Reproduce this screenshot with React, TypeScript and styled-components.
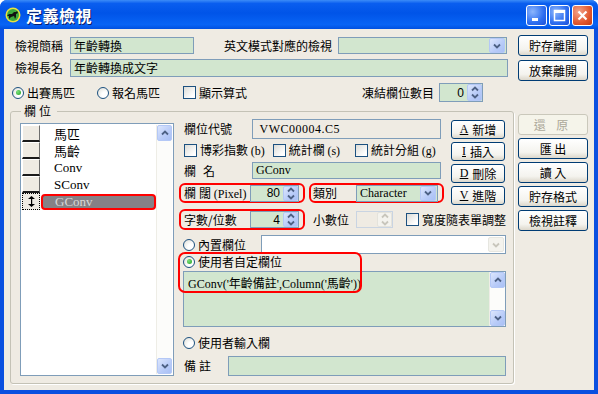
import React from 'react';
import styled, { createGlobalStyle } from 'styled-components';

const FIELD_GREEN = '#D2E6CF';
const FIELD_BORDER = '#7F9DB9';
const FACE = '#EFEBE3';

const GlobalStyle = createGlobalStyle`
  html, body { margin: 0; padding: 0; background: #fff; }
  body {
    font-family: "Liberation Serif", "Noto Sans CJK TC", serif;
    font-size: 12px;
    color: #000;
  }
  * { box-sizing: border-box; }
`;

const Window = styled.div`
  width: 598px;
  height: 394px;
  display: flex;
  flex-direction: column;
  background: #0A4FE0;
  border-radius: 7px 7px 0 0;
  overflow: hidden;
`;

const TitleBar = styled.div`
  height: 29px;
  flex: none;
  display: flex;
  align-items: center;
  padding: 0 5px 0 5px;
  background: linear-gradient(#3C8CF8 0%, #0A5EEF 12%, #0054E8 45%, #0864F5 85%, #0050E0 100%);
`;

const TitleText = styled.div`
  margin-left: 5px;
  font-family: "Noto Sans CJK TC", sans-serif;
  font-size: 16px;
  font-weight: 700;
  color: #fff;
  text-shadow: 1px 1px 0 #0A1E6A;
  letter-spacing: 0.5px;
`;

const TitleButtons = styled.div`
  margin-left: auto;
  display: flex;
  gap: 2px;
  margin-top: 2px;
`;

const CaptionButton = styled.div<{ $close?: boolean }>`
  width: 21px;
  height: 21px;
  border: 1px solid #fff;
  border-radius: 3px;
  display: flex;
  align-items: center;
  justify-content: center;
  background: ${(p) =>
    p.$close
      ? 'radial-gradient(circle at 30% 30%, #F2A48C, #E2582F 60%, #C33A12)'
      : 'radial-gradient(circle at 30% 30%, #8CB5FC, #2E6EF0 60%, #1A4FD8)'};
`;

const Client = styled.div`
  flex: 1;
  margin: 0 4px 4px 4px;
  background: ${FACE};
  display: flex;
  gap: 6px;
  padding: 6px 6px 6px 6px;
`;

const LeftMain = styled.div`
  width: 502px;
  display: flex;
  flex-direction: column;
`;

const Row = styled.div<{ $mt?: number; $h?: number }>`
  display: flex;
  align-items: center;
  margin-top: ${(p) => p.$mt ?? 0}px;
  height: ${(p) => p.$h ?? 17}px;
`;

const Label = styled.span<{ $w?: number; $ml?: number; $ls?: number }>`
  font-family: "Noto Sans CJK TC", sans-serif;
  white-space: nowrap;
  width: ${(p) => (p.$w ? `${p.$w}px` : 'auto')};
  margin-left: ${(p) => p.$ml ?? 0}px;
  letter-spacing: ${(p) => p.$ls ?? 0}px;
  flex: none;
  line-height: 14px;
`;

const Latin = styled.span`
  font-family: "Liberation Serif", serif;
`;

const Spaced = styled.span<{ $gap: number }>`
  margin-right: ${(p) => p.$gap}px;
`;

const Field = styled.div<{ $w?: number; $h?: number; $bg?: string; $ml?: number }>`
  width: ${(p) => (p.$w ? `${p.$w}px` : 'auto')};
  flex: ${(p) => (p.$w ? 'none' : '1')};
  height: ${(p) => p.$h ?? 17}px;
  margin-left: ${(p) => p.$ml ?? 0}px;
  border: 1px solid ${FIELD_BORDER};
  background: ${(p) => p.$bg ?? FIELD_GREEN};
  display: flex;
  align-items: center;
  padding: 0 3px;
  white-space: nowrap;
  overflow: hidden;
  font-family: "Liberation Serif", "Noto Sans CJK TC", serif;
`;

const DropButton = styled.div<{ $disabled?: boolean }>`
  margin-left: auto;
  margin-right: -2px;
  width: 16px;
  height: 15px;
  flex: none;
  border: 1px solid ${(p) => (p.$disabled ? '#E6E6E0' : '#B4C8F6')};
  border-radius: 2px;
  background: ${(p) =>
    p.$disabled ? '#F4F3EE' : 'linear-gradient(135deg, #DCE6FD, #B8CBF8 60%, #A9C0F5)'};
  display: flex;
  align-items: center;
  justify-content: center;
`;

const Chevron = ({ up, color = '#4D6185' }: { up?: boolean; color?: string }) => (
  <svg width="8" height="6" viewBox="0 0 8 6">
    <path
      d={up ? 'M1 4.5 L4 1.5 L7 4.5' : 'M1 1.5 L4 4.5 L7 1.5'}
      fill="none"
      stroke={color}
      strokeWidth="1.8"
    />
  </svg>
);

const SpinBox = styled.div<{ $w: number; $h?: number; $bg?: string; $disabled?: boolean; $ml?: number }>`
  width: ${(p) => p.$w}px;
  height: ${(p) => p.$h ?? 17}px;
  margin-left: ${(p) => p.$ml ?? 0}px;
  flex: none;
  border: 1px solid ${(p) => (p.$disabled ? '#C9D4E2' : FIELD_BORDER)};
  background: ${(p) => p.$bg ?? FIELD_GREEN};
  display: flex;
  align-items: center;
`;

const SpinValue = styled.span`
  flex: 1;
  text-align: right;
  padding-right: 3px;
  font-family: "Liberation Sans", sans-serif;
  font-size: 12px;
`;

const SpinButton = styled.div<{ $disabled?: boolean }>`
  width: 15px;
  align-self: stretch;
  border: 1px solid ${(p) => (p.$disabled ? '#E4E3DC' : '#B4C8F6')};
  border-radius: 2px;
  background: ${(p) =>
    p.$disabled ? '#F4F3EE' : 'linear-gradient(135deg, #DCE6FD, #B8CBF8 60%, #A9C0F5)'};
  display: flex;
  flex-direction: column;
  align-items: center;
  justify-content: center;
  gap: 1px;
`;

const Spin = ({ w, value, h, ml, disabled }: { w: number; value?: string; h?: number; ml?: number; disabled?: boolean }) => {
  const c = disabled ? '#C8C6BC' : '#4D6185';
  return (
    <SpinBox $w={w} $h={h} $ml={ml} $disabled={disabled} $bg={disabled ? FACE : FIELD_GREEN}>
      <SpinValue>{value}</SpinValue>
      <SpinButton $disabled={disabled}>
        <Chevron up color={c} />
        <Chevron color={c} />
      </SpinButton>
    </SpinBox>
  );
};

const RadioCircle = styled.span`
  width: 12px;
  height: 12px;
  flex: none;
  border-radius: 50%;
  border: 1px solid #1C5180;
  background: radial-gradient(circle at 70% 70%, #fff 30%, #DCDCD4);
  display: flex;
  align-items: center;
  justify-content: center;
`;

const RadioDot = styled.span`
  width: 5px;
  height: 5px;
  border-radius: 50%;
  background: radial-gradient(circle at 35% 35%, #7CE07C, #21A121);
`;

const CheckSquare = styled.span`
  width: 13px;
  height: 13px;
  flex: none;
  border: 1px solid #1C5180;
  background: linear-gradient(135deg, #DCDCD7, #fff 80%);
`;

const Option = styled.div<{ $ml?: number }>`
  display: flex;
  align-items: center;
  gap: 3px;
  margin-left: ${(p) => p.$ml ?? 0}px;
  font-family: "Noto Sans CJK TC", sans-serif;
  white-space: nowrap;
  line-height: 14px;
`;

const Radio = ({ checked, children, ml }: { checked?: boolean; children: React.ReactNode; ml?: number }) => (
  <Option $ml={ml}>
    <RadioCircle>{checked && <RadioDot />}</RadioCircle>
    <span>{children}</span>
  </Option>
);

const Check = ({ children, ml }: { children: React.ReactNode; ml?: number }) => (
  <Option $ml={ml}>
    <CheckSquare />
    <span>{children}</span>
  </Option>
);

const XPButton = styled.div<{ $disabled?: boolean; $h?: number }>`
  height: ${(p) => p.$h ?? 21}px;
  width: 100%;
  flex: none;
  border: 1px solid ${(p) => (p.$disabled ? '#CAC8BB' : '#003C74')};
  border-radius: 3px;
  background: ${(p) =>
    p.$disabled ? '#F5F4EA' : 'linear-gradient(#FFFFFF, #F4F3EE 70%, #DCD7CB)'};
  color: ${(p) => (p.$disabled ? '#ACA899' : '#000')};
  display: flex;
  align-items: center;
  justify-content: center;
  font-family: "Noto Sans CJK TC", sans-serif;
  letter-spacing: ${(p) => (p.$disabled ? 4 : 0)}px;
  white-space: nowrap;
`;

const Hot = styled.span`
  font-family: "Liberation Serif", serif;
  text-decoration: underline;
  margin-right: 4px;
`;

const RightCol = styled.div`
  width: 70px;
  display: flex;
  flex-direction: column;
  gap: 3px;
`;

const FreezeGroup = styled.div`
  margin-left: auto;
  margin-right: 29px;
  display: flex;
  align-items: center;
`;

const Group = styled.fieldset`
  margin: 2px 0 0 0;
  flex: 1;
  min-height: 0;
  border: 1px solid #C4C2B6;
  border-radius: 3px;
  box-shadow: 1px 1px 0 #fff;
  padding: 1px 7px 7px 9px;
  display: flex;
  gap: 7px;
`;

const Legend = styled.legend`
  padding: 0 3px;
  margin-left: 1px;
  font-family: "Noto Sans CJK TC", sans-serif;
  letter-spacing: 3px;
  line-height: 14px;
`;

const List = styled.div`
  width: 154px;
  margin-top: 4px;
  border: 1px solid ${FIELD_BORDER};
  background: #fff;
  display: flex;
  padding: 1px;
`;

const ListRows = styled.div`
  flex: 1;
  display: flex;
  flex-direction: column;
`;

const ListRow = styled.div`
  height: 17px;
  display: flex;
  align-items: stretch;
`;

const RowHead = styled.div<{ $current?: boolean }>`
  width: 18px;
  flex: none;
  background: ${FACE};
  border-bottom: ${(p) => (p.$current ? '1px dotted #000' : '2px solid #1A1A1A')};
  border-right: 1px ${(p) => (p.$current ? 'dotted #000' : 'solid #6E6E6E')};
  border-top: ${(p) => (p.$current ? '1px dotted #000' : '1px solid #fff')};
  border-left: ${(p) => (p.$current ? '1px dotted #000' : '1px solid #fff')};
  display: flex;
  align-items: center;
  justify-content: center;
`;

const RowCell = styled.div<{ $selected?: boolean }>`
  flex: 1;
  display: flex;
  align-items: center;
  padding-left: ${(p) => (p.$selected ? 12 : 14)}px;
  margin: ${(p) => (p.$selected ? '1px 0 0 1px' : '0')};
  background: ${(p) => (p.$selected ? '#868186' : 'transparent')};
  color: ${(p) => (p.$selected ? '#D8D8D8' : '#000')};
  border: ${(p) => (p.$selected ? '2px solid #F00' : 'none')};
  border-radius: ${(p) => (p.$selected ? '4px' : '0')};
  font-family: "Liberation Serif", "Noto Sans CJK TC", serif;
  font-size: 13px;
`;

const ScrollTrack = styled.div<{ $w?: number }>`
  width: ${(p) => p.$w ?? 16}px;
  flex: none;
  background: #FCFCFA;
  border-left: 1px solid #EEEDE6;
  display: flex;
  flex-direction: column;
  justify-content: space-between;
`;

const ScrollArrow = styled.div`
  height: 16px;
  border: 1px solid #B4C8F6;
  border-radius: 2px;
  background: linear-gradient(135deg, #DCE6FD, #B8CBF8 60%, #A9C0F5);
  display: flex;
  align-items: center;
  justify-content: center;
`;

const Pane = styled.div`
  flex: 1;
  display: flex;
  flex-direction: column;
`;

const TopSection = styled.div`
  display: flex;
  gap: 10px;
`;

const Fields = styled.div`
  width: 260px;
  display: flex;
  flex-direction: column;
`;

const PaneButtons = styled.div`
  width: 54px;
  display: flex;
  flex-direction: column;
  gap: 3px;
  padding-top: 1px;
`;

const Highlight = styled.div<{ $ml?: number }>`
  display: flex;
  align-items: center;
  border: 2px solid #F00;
  border-radius: 6px;
  padding: 0 4px 0 3px;
  margin-left: ${(p) => p.$ml ?? -2}px;
  height: 100%;
`;

const CustomBlock = styled.div`
  position: relative;
  margin-top: 1px;
  display: flex;
  flex-direction: column;
  gap: 3px;
`;

/* annotation frame drawn over the radio and the first line of the formula */
const Annotation = styled.div`
  position: absolute;
  left: -3px;
  top: -3px;
  width: 184px;
  height: 41px;
  border: 2px solid #F00;
  border-radius: 7px;
  pointer-events: none;
`;

const TextArea = styled.div`
  height: 56px;
  border: 1px solid ${FIELD_BORDER};
  background: ${FIELD_GREEN};
  display: flex;
  margin-left: 2px;
`;

const TextContent = styled.div`
  flex: 1;
  padding: 2px 4px;
  font-family: "Liberation Serif", "Noto Sans CJK TC", serif;
  font-size: 12px;
  white-space: nowrap;
`;

const AppIcon = () => (
  <svg width="16" height="16" viewBox="0 0 16 16">
    <circle cx="8" cy="8" r="7.5" fill="#E8E040" />
    <circle cx="8" cy="8" r="6" fill="#3DAA3D" />
    <path d="M2 9 L4 7 L7 7 L9 5 L11 5 L12 4 L13 6 L11 7 L11 10 L10 12 L9 9 L6 10 L4 12 L4 9 Z" fill="#111" />
  </svg>
);

const rows = ['馬匹', '馬齡', 'Conv', 'SConv'];

export default function App() {
  return (
    <>
      <GlobalStyle />
      <Window>
        <TitleBar>
          <AppIcon />
          <TitleText>定義檢視</TitleText>
          <TitleButtons>
            <CaptionButton>
              <svg width="13" height="13" viewBox="0 0 13 13">
                <rect x="2" y="9" width="6" height="3" fill="#fff" />
              </svg>
            </CaptionButton>
            <CaptionButton>
              <svg width="13" height="13" viewBox="0 0 13 13">
                <rect x="1.5" y="1.5" width="10" height="10" fill="none" stroke="#fff" strokeWidth="1.5" />
                <rect x="1" y="1" width="11" height="3" fill="#fff" />
              </svg>
            </CaptionButton>
            <CaptionButton $close>
              <svg width="13" height="13" viewBox="0 0 13 13">
                <path d="M2.5 2.5 L10.5 10.5 M10.5 2.5 L2.5 10.5" stroke="#fff" strokeWidth="2.2" />
              </svg>
            </CaptionButton>
          </TitleButtons>
        </TitleBar>
        <Client>
          <LeftMain>
            <Row $mt={2}>
              <Label $w={55} $ml={5}>檢視簡稱</Label>
              <Field $w={124}>年齡轉換</Field>
              <Label $ml={30}>英文模式對應的檢視</Label>
              <Field $w={169} $ml={6}>
                <DropButton>
                  <Chevron />
                </DropButton>
              </Field>
            </Row>
            <Row $mt={5} $h={18}>
              <Label $w={55} $ml={5}>檢視長名</Label>
              <Field $w={438} $h={18}>年齡轉換成文字</Field>
            </Row>
            <Row $mt={6} $h={19}>
              <Radio checked ml={2}>出賽馬匹</Radio>
              <Radio ml={22}>報名馬匹</Radio>
              <Check ml={23}>顯示算式</Check>
              <FreezeGroup>
                <Label>凍結欄位數目</Label>
                <Spin w={44} h={19} ml={5} value="0" />
              </FreezeGroup>
            </Row>
            <Group>
              <Legend>欄位</Legend>
              <List>
                <ListRows>
                  {rows.map((r) => (
                    <ListRow key={r}>
                      <RowHead />
                      <RowCell>{r}</RowCell>
                    </ListRow>
                  ))}
                  <ListRow>
                    <RowHead $current>
                      <svg width="7" height="11" viewBox="0 0 7 11">
                        <path d="M3.5 0 L7 3 L0 3 Z M3.5 11 L7 8 L0 8 Z" fill="#000" />
                        <rect x="3" y="2" width="1.2" height="7" fill="#000" />
                      </svg>
                    </RowHead>
                    <RowCell $selected>GConv</RowCell>
                  </ListRow>
                </ListRows>
                <ScrollTrack>
                  <ScrollArrow>
                    <Chevron up />
                  </ScrollArrow>
                  <ScrollArrow>
                    <Chevron />
                  </ScrollArrow>
                </ScrollTrack>
              </List>
              <Pane>
                <TopSection>
                  <Fields>
                    <Row $h={20}>
                      <Label $w={68} $ml={3}>欄位代號</Label>
                      <Field $bg={FACE} $h={20} style={{ letterSpacing: 0.5 }}>
                        &nbsp;VWC00004.C5
                      </Field>
                    </Row>
                    <Row $mt={4} $h={14}>
                      <Check ml={3}>
                        博彩指數 <Latin>(b)</Latin>
                      </Check>
                      <Check ml={8}>
                        統計欄 <Latin>(s)</Latin>
                      </Check>
                      <Check ml={15}>
                        統計分組 <Latin>(g)</Latin>
                      </Check>
                    </Row>
                    <Row $mt={5} $h={17}>
                      <Label $w={68} $ml={3} $ls={7}>欄名</Label>
                      <Field $h={17}>GConv</Field>
                    </Row>
                    <Row $mt={4} $h={20}>
                      <Highlight>
                        <Label $w={66}>
                          <Spaced $gap={3}>欄</Spaced>闊 <Latin>(Pixel)</Latin>
                        </Label>
                        <Spin w={49} value="80" />
                      </Highlight>
                      <Highlight $ml={4}>
                        <Label $w={43} style={{ marginLeft: -1 }}>類別</Label>
                        <Field $w={82} $h={17}>
                          Character
                          <DropButton>
                            <Chevron />
                          </DropButton>
                        </Field>
                      </Highlight>
                    </Row>
                  </Fields>
                  <PaneButtons>
                    <XPButton $h={19}><Hot>A</Hot>新增</XPButton>
                    <XPButton $h={19}><Hot>I</Hot>插入</XPButton>
                    <XPButton $h={19}><Hot>D</Hot>刪除</XPButton>
                    <XPButton $h={19}><Hot>V</Hot>進階</XPButton>
                  </PaneButtons>
                </TopSection>
                <Row $mt={4} $h={21}>
                  <Highlight>
                    <Label $w={66}>字數/位數</Label>
                    <Spin w={49} value="4" />
                  </Highlight>
                  <Label $ml={8} $w={43}>小數位</Label>
                  <Spin w={37} disabled />
                  <Check ml={13}>寬度隨表單調整</Check>
                </Row>
                <Row $mt={5} $h={19}>
                  <Radio ml={2}>內置欄位</Radio>
                  <Field $bg="#fff" $h={19} $ml={15}>
                    <DropButton $disabled>
                      <Chevron color="#C8C6BC" />
                    </DropButton>
                  </Field>
                </Row>
                <CustomBlock>
                  <Row $h={13} $mt={0}>
                    <Radio checked ml={2}>使用者自定欄位</Radio>
                  </Row>
                  <TextArea>
                    <TextContent>GConv('年齡備註',Column('馬齡'))</TextContent>
                    <ScrollTrack $w={16}>
                      <ScrollArrow>
                        <Chevron up />
                      </ScrollArrow>
                      <ScrollArrow>
                        <Chevron />
                      </ScrollArrow>
                    </ScrollTrack>
                  </TextArea>
                  <Annotation />
                </CustomBlock>
                <Row $mt={9} $h={13}>
                  <Radio ml={2}>使用者輸入欄</Radio>
                </Row>
                <Row $mt={7} $h={20}>
                  <Label $w={44} $ml={3} $ls={3}>備註</Label>
                  <Field $h={20} />
                </Row>
              </Pane>
            </Group>
          </LeftMain>
          <RightCol>
            <XPButton>貯存離開</XPButton>
            <XPButton style={{ marginTop: 1 }}>放棄離開</XPButton>
            <XPButton $disabled style={{ marginTop: 30 }}>還 原</XPButton>
            <XPButton>匯 出</XPButton>
            <XPButton>讀 入</XPButton>
            <XPButton>貯存格式</XPButton>
            <XPButton>檢視註釋</XPButton>
          </RightCol>
        </Client>
      </Window>
    </>
  );
}
